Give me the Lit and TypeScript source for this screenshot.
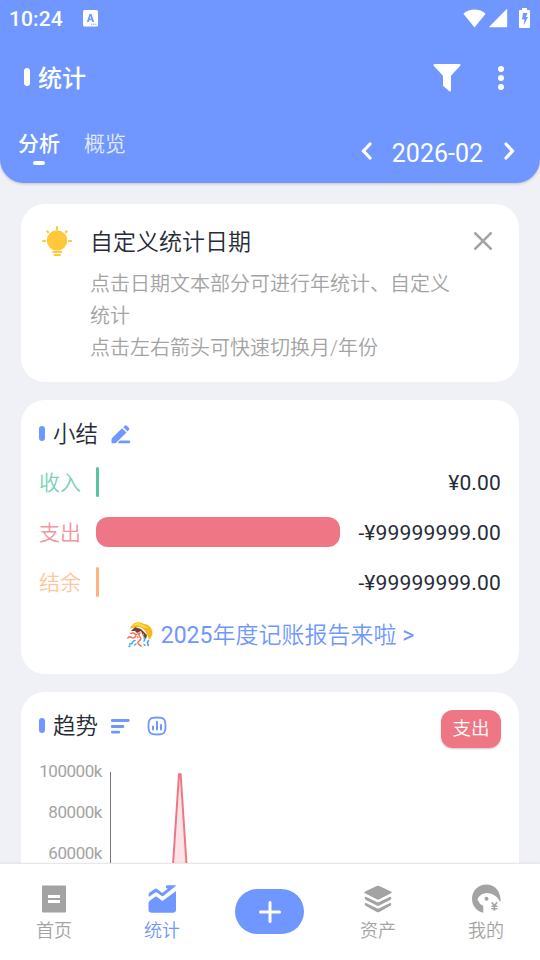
import { LitElement, html, svg, css } from "lit";
import { customElement } from "lit/decorators.js";
import { styleMap } from "lit/directives/style-map.js";

const icons = {
  input: html`<svg width="15" height="17" viewBox="0 0 15 17"><rect width="15" height="16.5" rx="1.5" fill="#fff"/><path d="M3.8 12 6.5 4h2l2.7 8H9.3l-.5-1.7H6.2L5.700 12ZM6.700 8.700h1.600L7.500 6Z" fill="#7097ff"/><path d="M8 14.200h1.200M10.200 14.200h1.200M12.300 14.200h1.200" stroke="#7097ff"/></svg>`,
  wifi: html`<svg width="23" height="19" viewBox="0 0 23 19"><path d="M.4 4.800C6.500-.8 16.500-.8 22.600 4.800L11.500 18.400Z" fill="#fff"/></svg>`,
  signal: html`<svg width="19" height="19" viewBox="0 0 19 19"><path d="M18.200.3V17.500q0 .8-.8.8H.8q-1.100 0-.3-.9L17 .7Q18.200-.4 18.200.3Z" fill="#fff"/></svg>`,
  battery: html`<svg width="11" height="20" viewBox="0 0 11 20"><path d="M3 0h5v2h2q1 0 1 1v16q0 1-1 1H1q-1 0-1-1V3q0-1 1-1h2Z" fill="#fff"/><path d="M4 5h4.500L7 9h2L4.500 17.500 5.500 11.500H3Z" fill="#7097ff"/></svg>`,
  filter: html`<svg width="28" height="28" viewBox="0 0 28 28"><path d="M1.200 0H26.800q1.200.3.400 1.700L18 11.700V26.500q-.3 1.600-1.700.8L10.500 22.300Q10 21.900 10 21V11.700L.6 1.700Q0 .5 1.200 0Z" fill="#fff"/></svg>`,
  more: html`<svg width="6" height="24" viewBox="0 0 6 24"><g fill="#fff"><circle cx="3" cy="3" r="3"/><circle cx="3" cy="12" r="3"/><circle cx="3" cy="21" r="3"/></g></svg>`,
  prev: html`<svg width="11" height="18" viewBox="0 0 11 18"><path d="M9 2 2.500 9 9 16" fill="none" stroke="#fff" stroke-width="3.200" stroke-linecap="round"/></svg>`,
  next: html`<svg width="11" height="18" viewBox="0 0 11 18"><path d="M2 2 8.500 9 2 16" fill="none" stroke="#fff" stroke-width="3.200" stroke-linecap="round"/></svg>`,
  bulb: html`<svg width="30" height="30" viewBox="0 0 30 30"><circle cx="15" cy="14.500" r="10.200" fill="#ffc839"/><path d="M15 1v2.200M5.200 5.200l1 1M24.800 5.200l-1 1M1 15h2M27 15h2M11.200 26h8M12.500 29h5.500" stroke="#ffc839" stroke-width="2" stroke-linecap="round"/></svg>`,
  close: html`<svg width="18" height="18" viewBox="0 0 18 18"><path d="m1.300 1.300 15.400 15.400M16.700 1.300 1.300 16.700" stroke="#a3a3a3" stroke-width="2.600" stroke-linecap="round"/></svg>`,
  edit: html`<svg width="20" height="19" viewBox="0 0 20 19"><path d="M11 3.200 15.500 7.500 5.600 17.200Q4.700 18.200 3.600 18.200H1.400Q.5 18.200.5 17.200V14.700Q.5 13.800 1.200 13ZM12.200 2.100 13.700.700Q14.600-.2 15.500.6L18 2.900Q18.800 3.800 18 4.700L16.500 6.400ZM9 15.600H18.300Q19.300 15.900 19.300 16.900T18.300 18.200H7.300Q6.900 17.600 7.300 17Z" fill="#7097ff"/></svg>`,
  sort: html`<svg width="19" height="15" viewBox="0 0 19 15"><path d="M1.300 1.500h16M1.300 7.500h10.700M1.300 13.200h6.500" stroke="#7097ff" stroke-width="2.800" stroke-linecap="round"/></svg>`,
  chart: html`<svg width="20" height="20" viewBox="0 0 20 20"><path d="M10 1.500C17 1.500 18.500 3.200 18.500 10S17 18.500 10 18.500 1.500 17 1.500 10 3 1.500 10 1.500Z" fill="none" stroke="#7097ff" stroke-width="1.800"/><path d="M6 10.500v3M10 5.800v7.700M14 9v4.500" stroke="#7097ff" stroke-width="2" stroke-linecap="round"/></svg>`,
  party: html`<svg width="26" height="26" viewBox="0 0 26 26"><path d="M4 9 8 5 14 7 20 13 19 17 16 14 14 9 10 11 8 9Z" fill="#6b4338"/><path d="M3 7Q5 1 10 .5Q14-.3 17 2Q23 2.500 25 8Q26.500 14 22 17.500Q20 10 15.500 6.500Q10 3.500 3 7Z" fill="#f4b81c"/><path d="M5 4Q10-1 15 2.500L22 6Q18 6 15 5Q10 2 5 4Z" fill="#ffdc45"/><g fill="none" stroke-linecap="round" stroke-width="1.500"><path d="M4 11.500q3-1 4 .500t4-1M.8 16q2-2 4-.5t4-1.500M13 11q-2 2 0 4t-1 4 2 5" stroke="#ff7058"/><path d="M8 18.500q-2 0-2.500 2t-3 1.500M9 22l-1.500 1M17 16q1.500 1 0 3M21.500 18.500q-2 2 0 5M17 22.500l1 .8M2 24.500l1-.5" stroke="#42a9ee"/><path d="M16 12l.5 1M10.500 15l.3.5" stroke="#ff806c"/></g></svg>`,
  plus: html`<svg width="22" height="22" viewBox="0 0 22 22"><path d="M11 1.500v19M1.500 11h19" stroke="#fff" stroke-width="3" stroke-linecap="round"/></svg>`,
};

const navIcons = {
  home: svg`<path d="M3 1.500H25q1 0 1 1v25q0 1-1 1H3q-1 0-1-1v-25q0-1 1-1ZM8 11v3H20v-3ZM8 16v3H20v-3Z" fill-rule="evenodd"/>`,
  stats: svg`<path d="M.7 13V10.200Q.8 9.200 1.600 8.600L7.200 4.800Q8.200 4.200 9.100 5L14.300 9.100 20 4.500H19Q17.800 4.200 17.800 3V2.600Q18 1.300 19.200 1.200H27.600Q28 1.200 28 1.700L15.300 11.900Q14.300 12.600 13.300 11.800L8.200 8Z"/><path d="M.5 19.300Q.5 17.500 2 16.400L7.300 12.700Q8 12.200 8.800 12.700L13.700 16.400Q14.400 17 15.200 16.400L28 7V25.500Q28 28.700 24.800 28.700H3.700Q.5 28.700.5 25.500Z"/>`,
  assets: svg`<path d="M12.800 2Q14 1.300 15.200 2L27 7.500Q28.500 8.400 27 9.300L15.200 15.300Q14 15.900 12.800 15.300L1 9.300Q-.4 8.400 1 7.500Z"/><path d="M.7 14Q.7 12.200 2.500 12.900L12.800 18Q14 18.600 15.200 18L25.500 12.900Q27.300 12.200 27.300 14 27.300 15.200 26 15.900L15.200 21.500Q14 22.200 12.800 21.500L2 15.900Q.7 15.200.7 14ZM.7 20.200Q.7 18.500 2.500 19.200L12.800 24.200Q14 24.800 15.200 24.200L25.500 19.200Q27.300 18.500 27.300 20.200 27.300 21.500 26 22.100L15.200 28Q14 28.600 12.800 28L2 22.100Q.7 21.500.7 20.200Z"/>`,
  me: svg`<path d="M11.300 28.700C4.500 27.500 0 21.500 0 14.700 0 6.500 6.500.5 14.500.5 23 .5 29 7.500 28.600 17.500H27.800C25.500 12.500 20.500 8.800 14.500 9 11 9.200 8.500 11 6.800 13Q5 15 5.600 16.200 7 17.500 8 20L10.500 21.200Q11.300 21.800 11.300 23Z"/><circle cx="14.500" cy="14.700" r="2"/><path d="m19.700 18.300 2.700 3.500 2.700-3.500M19.400 22.300h6M19.400 24.800h6M22.400 21.500v5.300" fill="none" stroke="#a3a3a3" stroke-width="1.500"/>`,
};

@customElement("app-root")
export class AppRoot extends LitElement {
  static styles = css`
    :host { display: flex; flex-direction: column; width: 540px; height: 960px; overflow: hidden; background: #f0f1f6; font-family: Roboto, "Noto Sans CJK SC", sans-serif; color: #262b37; }
    * { box-sizing: border-box; }
    svg { display: block; flex: none; }
    .row { display: flex; align-items: center; white-space: nowrap; }
    .grow { flex: 1; }
    .light { font-weight: 350; }
    .header { height: 183px; flex: none; background: #7097ff; color: #fff; border-radius: 0 0 24px 24px; box-shadow: 0 1px 3px #0003; }
    .status { height: 36px; padding: 0 10px 0 9px; font-size: 21px; font-weight: 500; }
    .status .clock { margin-right: 20px; padding-top: 2px; letter-spacing: .1px; }
    .status .wifi { margin-right: 3px; } .status .signal { margin-right: 11px; }
    .toolbar { height: 84px; padding: 0 36px 0 24px; font-size: 24px; font-weight: 500; }
    .toolbar .name { padding-bottom: 4px; }
    .mark { width: 6px; height: 18px; border-radius: 3px; background: #fff; margin: 0 8px 2px 0; }
    .toolbar .filter { margin-right: 37px; }
    .switch { height: 63px; padding: 0 25px 0 18px; align-items: flex-start; }
    .tab { font-size: 21px; line-height: 30px; padding-top: 9px; margin-right: 24px; display: flex; flex-direction: column; align-items: center; font-weight: 350; opacity: .8; }
    .tab.on { font-weight: 500; opacity: 1; }
    .tab.on::after { content: ""; width: 12px; height: 4px; border-radius: 2px; background: #fff; margin-top: 2px; }
    .date { height: 62px; font-size: 25px; }
    .date span { margin: 5px 21px 0 20px; }
    .content { flex: 1; min-height: 0; overflow: hidden; padding: 21px 21px 0; display: flex; flex-direction: column; gap: 18px; }
    .card { flex: none; background: #fff; border-radius: 24px; }
    .tip { height: 178px; padding: 21px 27px 0 21px; display: flex; align-items: flex-start; }
    .tip .bulb { margin: 1px 18px 0 0; }
    .tip .close { margin-top: 7px; }
    .tip-title { font-size: 23px; line-height: 34px; margin-top: 1px; }
    .tip-text { font-size: 20px; line-height: 32px; color: #a3a3a3; width: 366px; margin-top: 8px; font-weight: 350; }
    .summary { height: 274px; padding: 18px 18px 0; }
    .head { height: 32px; font-size: 22.500px; }
    .head .mark { background: #7097ff; height: 15px; margin-bottom: 1px; }
    .head .name { margin-right: 13px; padding-bottom: 4px; font-weight: 350; }
    .head .edit { padding-top: 1px; }
    .item { height: 50px; font-size: 21px; }
    .item .label { width: 57px; padding-bottom: 2px; font-weight: 350; }
    .item .track { flex: 1; margin-right: 18px; }
    .bar { height: 30px; }
    .amount { font-size: 21px; letter-spacing: .17px; padding-top: 2px; }
    .income .label { color: #7dd1b6; } .income .bar { background: #58c2a3; border-radius: 1.500px; }
    .expense .label { color: #f394a1; } .expense .bar { background: #ef7684; border-radius: 12px; }
    .balance .label { color: #ffc59b; } .balance .bar { background: #ffb27a; border-radius: 1.500px; }
    .items { padding-top: 7px; }
    .report { color: #7097ff; font-size: 23px; height: 34px; justify-content: center; gap: 8px; margin: 9px 0 0 1px; }
    .report .party { padding-top: 4px; }
    .trend { height: 330px; padding: 18px 18px 0; }
    .trend .head { align-items: flex-start; height: 53px; }
    .trend .title { height: 32px; }
    .trend .sort { margin-right: 17px; }
    .pill { background: #ef7684; color: #fff; width: 60px; height: 38px; border-radius: 12px; font-size: 18.500px; padding-bottom: 4px; justify-content: center; box-shadow: 0 1px 2px #0003; }
    .plot { display: flex; }
    .scale { width: 63px; text-align: right; font-size: 17px; letter-spacing: -.45px; line-height: 41px; color: #a3a3a3; margin-top: -12px; }
    .plot svg { margin: 9px 0 0 8px; }
    .nav { height: 97px; flex: none; background: #fff; border-top: 1px solid #e8e8ea; display: grid; grid-template-columns: repeat(5, 1fr); font-size: 18px; color: #a3a3a3; fill: #a3a3a3; box-shadow: 0 -1px 2px #0000000a; }
    .nav-item { display: flex; flex-direction: column; align-items: center; padding-top: 20px; line-height: 26px; }
    .nav-item svg { margin-bottom: 5px; }
    .nav-item.on { color: #7097ff; fill: #7097ff; }
    .add { width: 69px; height: 45px; border-radius: 23px; background: #7097ff; display: grid; place-items: center; margin: 25px 0 0 19px; }
  `;

  private rows = [
    { kind: "income", label: "收入", width: "3px", amount: "¥0.00" },
    { kind: "expense", label: "支出", width: "100%", amount: "-¥99999999.00" },
    { kind: "balance", label: "结余", width: "3px", amount: "-¥99999999.00" },
  ];

  private navItem(icon: unknown, label: string, on = false) {
    return html`<div class="nav-item ${on ? "on" : ""}"><svg width="29" height="29" viewBox="0 0 29 29">${icon}</svg><span class="light">${label}</span></div>`;
  }

  render() {
    return html`
      <div class="header">
        <div class="row status"><span class="clock">10:24</span>${icons.input}<span class="grow"></span><span class="wifi">${icons.wifi}</span><span class="signal">${icons.signal}</span>${icons.battery}</div>
        <div class="row toolbar"><span class="mark"></span><span class="name">统计</span><span class="grow"></span><span class="filter">${icons.filter}</span>${icons.more}</div>
        <div class="row switch"><span class="tab on">分析</span><span class="tab">概览</span><span class="grow"></span>
          <div class="row date">${icons.prev}<span>2026-02</span>${icons.next}</div></div>
      </div>
      <div class="content">
        <div class="card tip"><span class="bulb">${icons.bulb}</span>
          <div><div class="tip-title light">自定义统计日期</div><div class="tip-text">点击日期文本部分可进行年统计、自定义统计<br>点击左右箭头可快速切换月/年份</div></div>
          <span class="grow"></span><span class="close">${icons.close}</span></div>
        <div class="card summary">
          <div class="row head"><span class="mark"></span><span class="name">小结</span><span class="edit">${icons.edit}</span></div>
          <div class="items">${this.rows.map((r) => html`<div class="row item ${r.kind}"><span class="label">${r.label}</span><div class="track"><div class="bar" style=${styleMap({ width: r.width })}></div></div><span class="amount">${r.amount}</span></div>`)}</div>
          <div class="row report"><span class="party">${icons.party}</span><span>2025<span class="light">年度记账报告来啦</span> &gt;</span></div>
        </div>
        <div class="card trend">
          <div class="row head"><div class="row title"><span class="mark"></span><span class="name">趋势</span><span class="sort">${icons.sort}</span>${icons.chart}</div><span class="grow"></span><div class="row pill light">支出</div></div>
          <div class="plot"><div class="scale"><div>100000k</div><div>80000k</div><div>60000k</div></div>
            <svg width="390" height="220" viewBox="0 0 390 220"><path d="M.5 0V206" stroke="#77787d"/><path d="M55.500 206 69.800 2 84 206Z" fill="#fbe4e7"/><path d="M55.500 206 69 2.200H70.600L84 206" fill="none" stroke="#ef7684" stroke-width="2"/></svg></div>
        </div>
      </div>
      <div class="nav">
        ${this.navItem(navIcons.home, "首页")}${this.navItem(navIcons.stats, "统计", true)}
        <div class="add">${icons.plus}</div>
        ${this.navItem(navIcons.assets, "资产")}${this.navItem(navIcons.me, "我的")}
      </div>`;
  }
}
